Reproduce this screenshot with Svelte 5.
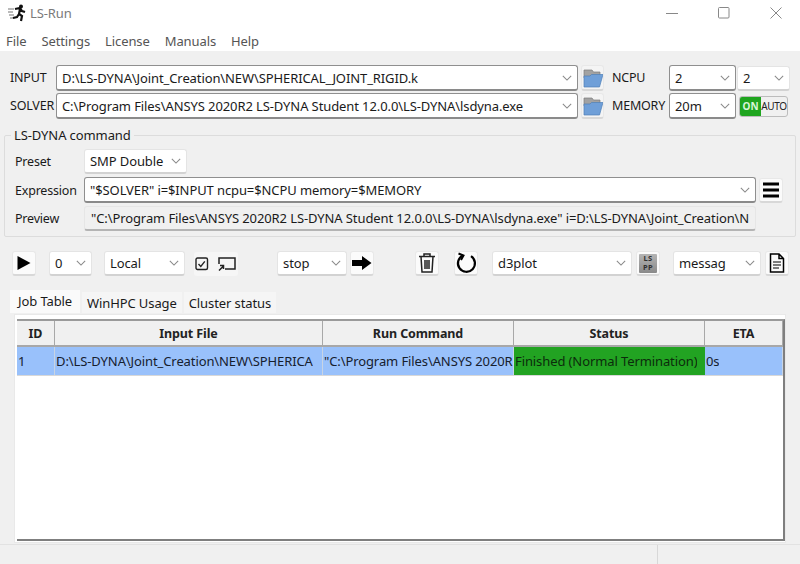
<script>
  const menus = ['File', 'Settings', 'License', 'Manuals', 'Help'];
  const tabs = ['Job Table', 'WinHPC Usage', 'Cluster status'];
  const columns = [
    { label: 'ID', width: 38 },
    { label: 'Input File', width: 268 },
    { label: 'Run Command', width: 191 },
    { label: 'Status', width: 191 },
    { label: 'ETA', width: 78 }
  ];
  // cells are cut at the column edge, only the visible part is listed
  const row = [
    '1',
    'D:\\LS-DYNA\\Joint_Creation\\NEW\\SPHERICA',
    '"C:\\Program Files\\ANSYS 2020R',
    'Finished (Normal Termination)',
    '0s'
  ];
  const solver = 'C:\\Program Files\\ANSYS 2020R2 LS-DYNA Student 12.0.0\\LS-DYNA\\lsdyna.exe';
  const input = 'D:\\LS-DYNA\\Joint_Creation\\NEW\\SPHERICAL_JOINT_RIGID.k';
  const preview = `"${solver}" i=D:\\LS-DYNA\\Joint_Creation\\N`;
</script>

{#snippet chevron()}
  <svg class="chev" viewBox="0 0 12 7"><path d="M1 1l5 5 5-5" /></svg>
{/snippet}

{#snippet combo(text, width, editable = false)}
  <div class="combo" class:edit={editable} style="width:{width}px">
    <span class="combo-text">{text}</span>
    {@render chevron()}
  </div>
{/snippet}

{#snippet folder()}
  <button class="tool small">
    <svg viewBox="0 0 20 20" width="20" height="20">
      <path d="M1 2h8l1.500 2H17v6H1z" fill="#a2a2a2" stroke="#7c7c7c" stroke-width=".7" />
      <path d="M1 19V8h6l1.500-1.500H20L16.500 19z" fill="#6f9fd8" stroke="#4f7fb8" stroke-width=".7" />
    </svg>
  </button>
{/snippet}

<div class="window">
  <header class="titlebar">
    <svg class="logo" viewBox="0 0 20 20" width="20" height="20">
      <g stroke="#777" stroke-width="1.200"><path d="M1 6h6M1 9h5M2 12h5M3 15h4" /></g>
      <circle cx="14" cy="3.500" r="2" fill="#111" />
      <path d="M8 6l5-1 2 3 3 1M13 6l-1 5 3 2-1 5M12 11l-2 3-4 1" fill="none" stroke="#111" stroke-width="2.200" />
    </svg>
    <span class="title">LS-Run</span>
    <div class="win-buttons">
      <svg viewBox="0 0 12 12" width="12" height="12"><path d="M0 6.500h12" /></svg>
      <svg viewBox="0 0 12 12" width="12" height="12"><rect x=".5" y=".5" width="10.500" height="10.500" rx="1" /></svg>
      <svg viewBox="0 0 12 12" width="12" height="12"><path d="M.5.5l11 11M11.500.5l-11 11" /></svg>
    </div>
  </header>

  <nav class="menubar">
    {#each menus as m}<span>{m}</span>{/each}
  </nav>

  <main class="content">
    <section class="paths">
      <span class="lbl-input">INPUT</span>
      {@render combo(input, 522, true)}
      {@render folder()}
      <span class="lbl-ncpu">NCPU</span>
      {@render combo('2', 67, true)}
      {@render combo('2', 53)}

      <span class="lbl-input">SOLVER</span>
      {@render combo(solver, 522, true)}
      {@render folder()}
      <span class="lbl-ncpu">MEMORY</span>
      {@render combo('20m', 67, true)}
      <div class="switch"><span class="on">ON</span><span class="auto">AUTO</span></div>
    </section>

    <fieldset class="group">
      <legend>LS-DYNA command</legend>
      <div class="cmd-grid">
        <span>Preset</span>
        <div class="cmd-field">{@render combo('SMP Double', 103)}</div>
        <span>Expression</span>
        <div class="cmd-field">
          {@render combo('"$SOLVER" i=$INPUT ncpu=$NCPU memory=$MEMORY', 672, true)}
          <button class="tool">
            <svg viewBox="0 0 16 16" width="16" height="16"><path d="M0 2h16M0 8h16M0 14h16" stroke="#000" stroke-width="3" /></svg>
          </button>
        </div>
        <span>Preview</span>
        <div class="preview"><span>{preview}</span></div>
      </div>
    </fieldset>

    <section class="toolbar">
      <button class="tool">
        <svg viewBox="0 0 16 16" width="16" height="16"><path d="M1.500 1v14l13-7z" fill="#000" /></svg>
      </button>
      <div class="ml13">{@render combo('0', 43)}</div>
      <div class="ml12">{@render combo('Local', 81)}</div>
      <div class="check-group">
        <svg viewBox="0 0 14 14" width="14" height="14" fill="none" stroke="#222"><rect x="1" y="1" width="11.500" height="11.500" rx="1.500" stroke-width="1.400" /><path d="M3.500 7l2.300 2.400 4-5" stroke-width="1.400" /></svg>
        <svg viewBox="0 0 18 14" width="18" height="14" fill="none" stroke="#222" stroke-width="1.500"><path d="M1 7V1h16v11H7" /><path d="M1 13.500l4.500-4.500M2 8.500h3.500V12" /></svg>
      </div>
      <div class="ml39">{@render combo('stop', 70)}</div>
      <button class="tool ml3">
        <svg viewBox="0 0 20 14" width="20" height="14"><path d="M0 4h10V0l9.500 7L10 14v-4H0z" fill="#000" /></svg>
      </button>
      <button class="tool ml41">
        <svg viewBox="0 0 18 22" width="18" height="22" fill="none" stroke="#222" stroke-width="1.500"><path d="M1 4.500h16M6 4.500V2h6v2.500M3 4.500l1 15.500h10l1-15.500M7 8v9M9 8v9M11 8v9" /></svg>
      </button>
      <button class="tool ml15">
        <svg viewBox="0 0 22 22" width="22" height="22" fill="none" stroke="#000" stroke-width="2.200"><path d="M8 3.500a8.500 8.500 0 1 0 8 .6" /><path d="M3.500 1.500l5 2-2.500 4.500" stroke-width="2" /></svg>
      </button>
      <div class="ml14">{@render combo('d3plot', 140)}</div>
      <button class="tool ml4"><span class="lspp">LS<br />PP</span></button>
      <div class="ml13">{@render combo('messag', 88)}</div>
      <button class="tool ml4">
        <svg viewBox="0 0 16 20" width="16" height="20" fill="none" stroke="#000" stroke-width="1.500"><path d="M1.500 1h8.500l4.500 4.500V19H1.500zM10 1v4.500h4.500" /><path d="M4 9h8M4 12h8M4 15h6" stroke-width="1.100" /></svg>
      </button>
    </section>

    <div class="tabs">
      {#each tabs as t, i}
        <span class="tab" class:active={i === 0}>{t}</span>
      {/each}
    </div>

    <div class="tab-panel">
      <div class="table">
        <div class="thead">
          {#each columns as c}
            <div class="th" style="width:{c.width}px">{c.label}</div>
          {/each}
        </div>
        <div class="tr">
          {#each columns as c, i}
            <div class="td" class:finished={i === 3} style="width:{c.width}px"><span>{row[i]}</span></div>
          {/each}
        </div>
      </div>
    </div>
  </main>

  <footer class="statusbar">
    <div class="status-left"></div>
    <div class="status-right"></div>
  </footer>
</div>

<style>
  :global(body) {
    margin: 0;
    background: #f0f0f0;
  }

  .window {
    width: 800px;
    height: 564px;
    display: flex;
    flex-direction: column;
    overflow: hidden;
    font-family: "Noto Sans", "Open Sans", sans-serif;
    font-size: 13px;
    letter-spacing: -0.1px;
    color: #1a1a1a;
    background: #f0f0f0;
  }

  .titlebar {
    height: 28px;
    flex: none;
    background: #fff;
    display: flex;
    align-items: center;
    padding-left: 7px;
  }

  .logo {
    margin-top: -3px;
  }

  .title {
    margin-left: 3px;
    margin-top: -2px;
    color: #7a7a7a;
  }

  .win-buttons {
    margin-left: auto;
    display: flex;
    gap: 40px;
    padding-right: 18px;
    margin-top: -2px;
  }

  .win-buttons svg {
    fill: none;
    stroke: #888;
    stroke-width: 1;
  }

  .menubar {
    height: 23px;
    flex: none;
    background: #fff;
    display: flex;
    align-items: center;
    gap: 15px;
    padding: 2px 0 0 6px;
    box-sizing: border-box;
    color: #555;
  }

  .content {
    flex: 1;
    min-height: 0;
    display: flex;
    flex-direction: column;
  }

  .paths {
    display: grid;
    grid-template-columns: 46px 522px 26px 65px 68px auto;
    grid-auto-rows: 26px;
    row-gap: 2px;
    padding: 14px 0 0 10px;
    align-items: center;
  }

  .paths .tool.small {
    margin-left: 3px;
    width: 23px;
  }

  .lbl-input,
  .lbl-ncpu {
    white-space: nowrap;
    font-size: 12.5px;
    letter-spacing: -0.2px;
    margin-top: -2px;
  }

  .lbl-ncpu {
    margin-left: 8px;
  }

  .combo {
    box-sizing: border-box;
    height: 25px;
    flex: none;
    display: flex;
    align-items: center;
    background: #fff;
    border-radius: 3px;
    border: 1px solid #e4e4e4;
    border-bottom: 2px solid #d2d2d2;
    padding: 0 4px 0 5px;
    overflow: hidden;
    white-space: nowrap;
  }

  .combo.edit {
    height: 26px;
    border: 1px solid #8f8f8f;
    border-bottom: 2px solid #8a8a8a;
  }

  .combo-text {
    flex: 1;
    min-width: 0;
    overflow: hidden;
  }

  .chev {
    flex: none;
    width: 10px;
    height: 6px;
    margin-left: 4px;
    margin-right: 1px;
    fill: none;
    stroke: #8a8a8a;
    stroke-width: 1.300;
  }

  .tool {
    box-sizing: border-box;
    flex: none;
    width: 24px;
    height: 25px;
    padding: 0;
    display: flex;
    align-items: center;
    justify-content: center;
    background: #fbfbfb;
    border: 1px solid #e8e8e8;
    border-bottom: 2px solid #d8d8d8;
    border-radius: 3px;
    font-family: inherit;
  }

  .tool.small {
    height: 26px;
    background: #f4f4f4;
  }

  .switch {
    box-sizing: border-box;
    width: 49px;
    height: 21px;
    margin-left: 2px;
    display: flex;
    align-items: center;
    border: 1px solid #bcbcbc;
    border-radius: 3px;
    background: #f0f0f0;
    overflow: hidden;
    font-size: 10px;
    font-weight: 700;
  }

  .on {
    width: 21px;
    height: 100%;
    display: flex;
    align-items: center;
    justify-content: center;
    background: #1fa51f;
    color: #d8f5d8;
  }

  .auto {
    flex: 1;
    text-align: center;
    font-weight: 400;
    color: #222;
    letter-spacing: -0.3px;
  }

  .group {
    box-sizing: border-box;
    width: 792px;
    height: 111px;
    margin: 7px 0 0 4px;
    padding: 0 0 0 10px;
    border: 1px solid #dcdcdc;
    border-radius: 2px;
  }

  .group legend {
    margin-left: -4px;
    padding: 0 3px;
  }

  .cmd-grid {
    display: grid;
    grid-template-columns: 69px auto;
    grid-template-rows: 25px 26px 25px;
    row-gap: 3px;
    align-items: center;
    margin-top: 5px;
    font-size: 12.5px;
    letter-spacing: -0.2px;
  }

  .cmd-grid :global(.combo),
  .preview {
    font-size: 13px;
    letter-spacing: -0.1px;
  }

  .cmd-field {
    display: flex;
    align-items: center;
    gap: 3px;
  }

  .preview {
    box-sizing: border-box;
    width: 672px;
    height: 25px;
    padding: 0 6px;
    display: flex;
    align-items: center;
    overflow: hidden;
    white-space: nowrap;
    background: #f0f0f0;
    border: 1px solid #e6e6e6;
    border-bottom: 2px solid #b4b4b4;
    border-radius: 3px;
  }

  .preview span {
    overflow: hidden;
  }

  .toolbar {
    display: flex;
    align-items: center;
    height: 25px;
    margin-top: 14px;
    padding-left: 12px;
  }

  .ml3 { margin-left: 3px; }
  .ml4 { margin-left: 4px; }
  .ml12 { margin-left: 12px; }
  .ml13 { margin-left: 13px; }
  .ml14 { margin-left: 14px; }
  .ml15 { margin-left: 15px; }
  .ml39 { margin-left: 39px; }
  .ml41 { margin-left: 41px; }

  .check-group {
    box-sizing: border-box;
    width: 44px;
    display: flex;
    align-items: center;
    justify-content: space-between;
    height: 24px;
    margin-left: 9px;
    padding: 0 2px 0 1px;
    background: #f6f6f6;
    border-radius: 3px;
  }

  .lspp {
    box-sizing: border-box;
    width: 18px;
    height: 19px;
    display: block;
    background: linear-gradient(#b4b4b4, #8a8a8a);
    border-radius: 1px;
    color: #303030;
    font-size: 7.5px;
    font-weight: 700;
    line-height: 9.500px;
    text-align: center;
    letter-spacing: 0.4px;
  }

  .tabs {
    display: flex;
    height: 23px;
    align-items: flex-end;
    margin-top: 14px;
    padding-left: 10px;
    gap: 2px;
  }

  .tab {
    box-sizing: border-box;
    height: 21px;
    padding: 0 5px;
    display: flex;
    align-items: center;
    background: #f5f5f5;
    white-space: nowrap;
  }

  .tab.active {
    height: 23px;
    width: 70px;
    padding: 0 0 2px 8px;
    background: #fafafa;
  }

  .tab-panel {
    box-sizing: border-box;
    width: 772px;
    height: 229px;
    margin: 1px 0 0 14px;
    padding: 4px 0 1px 2px;
    background: #fff;
    border: 1px solid #e9e9e9;
  }

  .table {
    box-sizing: border-box;
    height: 100%;
    width: 768px;
    border-top: 2px solid #9a9a9a;
    border-right: 2px solid #7f7f7f;
    border-bottom: 2px solid #7f7f7f;
    background: #fff;
  }

  .thead, .tr {
    display: flex;
  }

  .th {
    box-sizing: border-box;
    height: 26px;
    display: flex;
    align-items: center;
    justify-content: center;
    background: #f0f0f0;
    font-weight: 700;
    font-size: 12.5px;
    color: #222;
    border-right: 1px solid #a8a8a8;
    border-bottom: 2px solid #a8a8a8;
  }

  .tr {
    border-bottom: 1px solid #d8d8d8;
    width: 766px;
  }

  .td {
    box-sizing: border-box;
    height: 28px;
    padding-left: 1px;
    display: flex;
    align-items: center;
    overflow: hidden;
    white-space: nowrap;
    background: #99c1fb;
    border-right: 1px solid #c8d4e4;
    color: #16202e;
  }

  .td span {
    overflow: hidden;
  }

  .td.finished {
    background: #22a322;
    color: #0c2c0c;
    border-right: 1px solid #22a322;
  }

  .statusbar {
    height: 19px;
    flex: none;
    display: flex;
    border-top: 1px solid #e2e2e2;
    background: #f0f0f0;
  }

  .status-left {
    width: 657px;
    border-right: 1px solid #d8d8d8;
  }
</style>
